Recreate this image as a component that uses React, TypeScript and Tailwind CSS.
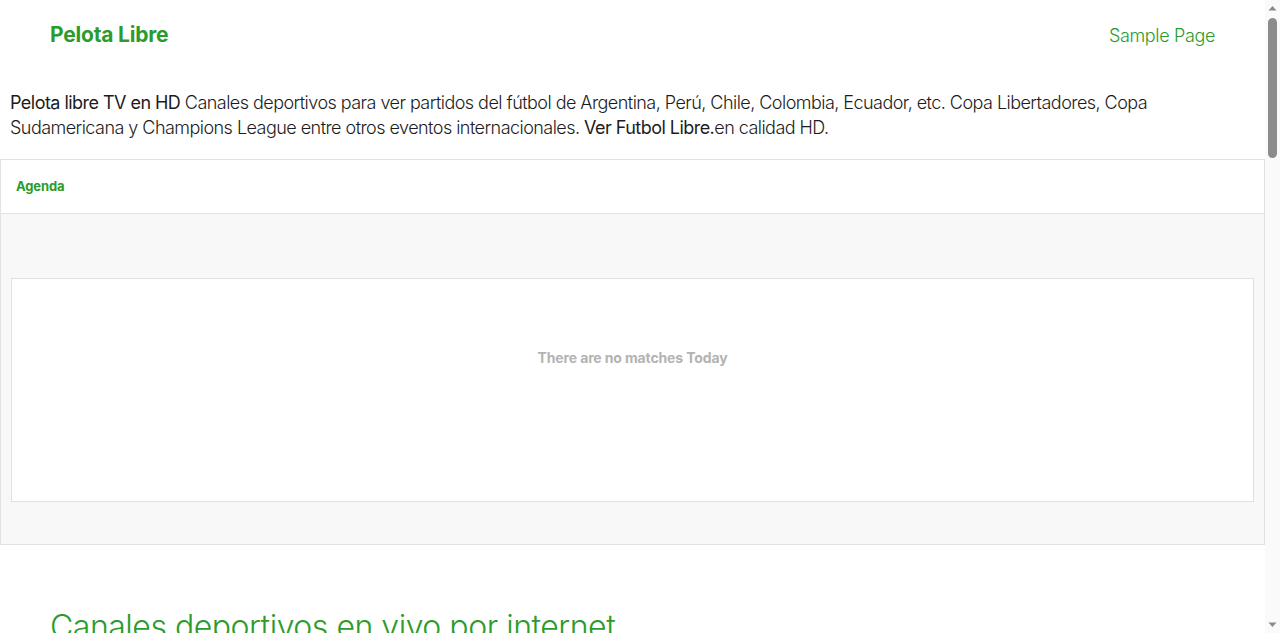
import React from 'react';

const green = 'text-[#2b9b2b]';

const Header: React.FC = () => (
  <header className="flex items-center justify-between h-[70px] pl-[50px] pr-[50px]">
    <a className={`${green} text-[21px] font-bold tracking-[-0.01em]`}>Pelota Libre</a>
    <a className={`${green} text-[18px] font-light tracking-[-0.02em]`}>Sample Page</a>
  </header>
);

const Agenda: React.FC = () => (
  <section className="border border-[#e2e2e2] bg-[#f8f8f8]">
    <div className="h-[54px] bg-white border-b border-[#e2e2e2] flex items-center px-[15px]">
      <span className={`${green} text-[13px] font-bold tracking-[-0.01em]`}>Agenda</span>
    </div>
    <div className="pt-[64px] pb-[42px] px-[10px]">
      <div className="h-[224px] bg-white border border-[#e0e0e0] flex justify-center pt-[69px]">
        <span className="text-[14px] font-bold text-[#b3b3b3] tracking-[-0.01em] leading-[20px]">
          There are no matches Today
        </span>
      </div>
    </div>
  </section>
);

// the browser's own scrollbar is hidden in the capture, so draw it
const ScrollBar: React.FC = () => (
  <aside className="w-[15px] shrink-0 bg-[#fafafa] flex flex-col items-center py-[5px]">
    <svg width="9" height="6" viewBox="0 0 9 6" className="shrink-0">
      <path d="M0.5 5.5 L4.5 1 L8.5 5.5 Z" fill="#8a8a8a" />
    </svg>
    <div className="mt-[7px] w-[9px] h-[140px] rounded-full bg-[#8c8c8c]" />
    <div className="flex-1" />
    <svg width="9" height="6" viewBox="0 0 9 6" className="shrink-0">
      <path d="M0.5 0.5 L8.5 0.5 L4.5 5 Z" fill="#8a8a8a" />
    </svg>
  </aside>
);

export default function App() {
  return (
    <div className="h-screen flex overflow-hidden bg-white font-['Inter','Noto_Sans',sans-serif] text-[#1c1c1c]">
      <main className="flex-1 min-w-0 overflow-y-auto">
        <Header />
        <p className="px-[10px] pt-[20px] pb-[19px] text-[18px] leading-[25px] font-light tracking-[-0.03em]">
          <strong className="font-normal">Pelota libre TV en HD</strong> Canales deportivos para ver partidos del fútbol
          de Argentina, Perú, Chile, Colombia, Ecuador, etc. Copa Libertadores, Copa Sudamericana y Champions League
          entre otros eventos internacionales. <strong className="font-normal">Ver Futbol Libre.</strong>en calidad HD.
        </p>
        <Agenda />
        <div className="px-[50px] pt-[62px] pb-[60px]">
          <h2 className={`${green} text-[32px] font-light leading-[40px] tracking-[-0.015em]`}>
            Canales deportivos en vivo por internet
          </h2>
          <p className="mt-4 text-[18px] leading-[25px] font-light tracking-[-0.03em]">
            Mira los mejores canales deportivos en vivo y en directo, gratis y en calidad HD desde cualquier dispositivo.
          </p>
        </div>
      </main>
      <ScrollBar />
    </div>
  );
}
